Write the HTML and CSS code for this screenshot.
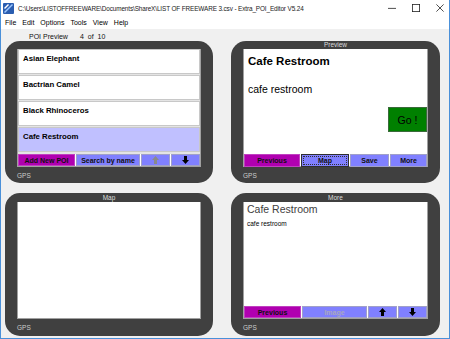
FILE: index.html
```html
<!DOCTYPE html>
<html lang="en">

<head>
    <meta charset="UTF-8">
    <title>Extra_POI_Editor V5.24</title>
    <link rel="stylesheet" href="styles.css">
</head>

<body>
    <div class="window">
        <div class="titlebar">
            <svg class="app-icon" width="11" height="11" viewBox="0 0 11 11">
                <rect x="0" y="0" width="11" height="11" rx="1" fill="#2a5db0"/>
                <path d="M1 9 L9 1 L10 2 L2 10 Z" fill="#9cc8ff"/>
                <path d="M1 5 L5 1 L6 2 L2 6 Z" fill="#ffffff"/>
            </svg>
            <span class="title">C:\Users\LISTOFFREEWARE\Documents\ShareX\LIST OF FREEWARE 3.csv - Extra_POI_Editor V5.24</span>
            <div class="controls">
                <svg width="10" height="10" viewBox="0 0 10 10"><path d="M0 5.5 H10" stroke="#222" stroke-width="1"/></svg>
                <svg width="10" height="10" viewBox="0 0 10 10"><rect x="0.5" y="0.5" width="9" height="9" fill="none" stroke="#222" stroke-width="1"/></svg>
                <svg width="10" height="10" viewBox="0 0 10 10"><path d="M0.5 0.5 L9.5 9.5 M9.5 0.5 L0.5 9.5" stroke="#222" stroke-width="1"/></svg>
            </div>
        </div>

        <div class="menubar">
            <span>File</span>
            <span>Edit</span>
            <span>Options</span>
            <span>Tools</span>
            <span>View</span>
            <span>Help</span>
        </div>

        <div class="client">
            <div class="status">
                <span class="status-name">POI Preview</span>
                <span class="status-count">4 &nbsp;of &nbsp;10</span>
            </div>

            <div class="panels">
                <!-- list of POIs -->
                <div class="device">
                    <div class="cap"></div>
                    <div class="screen">
                        <div class="poi-list">
                            <div class="poi">Asian Elephant</div>
                            <div class="poi">Bactrian Camel</div>
                            <div class="poi">Black Rhinoceros</div>
                            <div class="poi selected">Cafe Restroom</div>
                        </div>
                        <div class="btn-row list-btns">
                            <div class="btn magenta">Add New POI</div>
                            <div class="btn">Search by name</div>
                            <div class="btn"><svg width="7" height="8" viewBox="0 0 7 8"><path d="M3.5 0 L7 4 H5 V8 H2 V4 H0 Z" fill="#8a8a8a"/></svg></div>
                            <div class="btn"><svg width="7" height="8" viewBox="0 0 7 8"><path d="M3.5 8 L7 4 H5 V0 H2 V4 H0 Z" fill="#000"/></svg></div>
                        </div>
                    </div>
                    <div class="gps">GPS</div>
                </div>

                <!-- preview -->
                <div class="device">
                    <div class="cap">Preview</div>
                    <div class="screen">
                        <div class="preview-body">
                            <div class="preview-name">Cafe Restroom</div>
                            <div class="preview-desc">cafe restroom</div>
                            <div class="go">Go !</div>
                        </div>
                        <div class="btn-row preview-btns">
                            <div class="btn magenta">Previous</div>
                            <div class="btn pressed"><span>Map</span></div>
                            <div class="btn">Save</div>
                            <div class="btn">More</div>
                        </div>
                    </div>
                    <div class="gps">GPS</div>
                </div>

                <!-- map -->
                <div class="device low">
                    <div class="cap">Map</div>
                    <div class="screen"></div>
                    <div class="gps">GPS</div>
                </div>

                <!-- more -->
                <div class="device low">
                    <div class="cap">More</div>
                    <div class="screen">
                        <div class="more-body">
                            <div class="more-name">Cafe Restroom</div>
                            <div class="more-desc">cafe restroom</div>
                        </div>
                        <div class="btn-row more-btns">
                            <div class="btn magenta">Previous</div>
                            <div class="btn disabled">Image</div>
                            <div class="btn"><svg width="7" height="8" viewBox="0 0 7 8"><path d="M3.5 0 L7 4 H5 V8 H2 V4 H0 Z" fill="#000"/></svg></div>
                            <div class="btn"><svg width="7" height="8" viewBox="0 0 7 8"><path d="M3.5 8 L7 4 H5 V0 H2 V4 H0 Z" fill="#000"/></svg></div>
                        </div>
                    </div>
                    <div class="gps">GPS</div>
                </div>
            </div>
        </div>
    </div>
</body>

</html>
```

FILE: styles.css
```css
* {
    margin: 0;
    padding: 0;
    box-sizing: border-box;
}

body {
    width: 450px;
    height: 339px;
    overflow: hidden;
    font-family: 'Liberation Sans', Arial, sans-serif;
    color: #000;
    background-color: #f0f0f0;
}

.window {
    width: 450px;
    height: 339px;
    display: flex;
    flex-direction: column;
    border: 1px solid #4a90d9;
    border-top: none;
    background-color: #f0f0f0;
}

.titlebar {
    height: 16px;
    display: flex;
    align-items: center;
    background-color: #fff;
    padding-left: 2px;
}

.app-icon {
    flex: none;
    margin-right: 4px;
}

.title {
    font-size: 6.4px;
    letter-spacing: -0.12px;
    color: #222;
    white-space: nowrap;
    flex: 1;
}

.controls {
    display: flex;
    gap: 16px;
    padding-right: 5px;
}

.controls svg {
    width: 8px;
    height: 8px;
}

.menubar {
    height: 13px;
    display: flex;
    align-items: center;
    gap: 6px;
    padding-left: 4px;
    background-color: #fff;
    font-size: 7px;
}

.client {
    flex: 1;
    padding: 0 0 0 4px;
}

.status {
    height: 12px;
    display: flex;
    align-items: center;
    font-size: 7px;
    color: #111;
    padding-left: 24px;
    padding-top: 3px;
}

.status-name {
    width: 51px;
}

.panels {
    display: grid;
    grid-template-columns: 208px 209px;
    grid-template-rows: 142px 143px;
    column-gap: 18px;
    row-gap: 10px;
}

.device {
    background-color: #404040;
    border-radius: 15px;
    display: flex;
    flex-direction: column;
    padding: 0 12px 0 12px;
}

.cap {
    height: 8px;
    font-size: 6.5px;
    line-height: 7px;
    color: #ddd;
    text-align: center;
}

.device.low .cap {
    height: 9px;
    line-height: 9px;
}

.screen {
    flex: 1;
    background-color: #fff;
    border: 1px solid #a0a0a0;
    border-top: none;
    display: flex;
    flex-direction: column;
}

.gps {
    height: 16px;
    font-size: 6.5px;
    color: #ccc;
    padding-top: 5px;
}

.device.low .gps {
    height: 17px;
    padding-top: 5px;
}

.poi-list {
    flex: 1;
    display: flex;
    flex-direction: column;
    gap: 1px;
    background-color: #e4e4e4;
    padding-bottom: 2px;
}

.poi {
    flex: 1;
    background-color: #fff;
    border: 1px solid #c8c8c8;
    font-size: 7.8px;
    font-weight: bold;
    padding: 4px 4px;
}

.poi.selected {
    background-color: #c0c0ff;
}

.btn-row {
    height: 12px;
    display: grid;
    gap: 1px;
    background-color: #fff;
}

.list-btns {
    grid-template-columns: 57px 64px 29px 1fr;
}

.preview-btns {
    grid-template-columns: 56px 48px 39px 1fr;
}

.more-btns {
    grid-template-columns: 57px 65px 29px 1fr;
}

.btn {
    background-color: #8080ff;
    border: 1px solid #a0a0c8;
    font-size: 7px;
    font-weight: bold;
    color: #101010;
    display: flex;
    align-items: center;
    justify-content: center;
}

.btn.magenta {
    background-color: #b000b0;
    border-color: #c040c0;
}

.btn.pressed {
    border: 1px solid #303030;
    padding: 1px;
}

.btn.pressed span {
    display: flex;
    align-items: center;
    justify-content: center;
    width: 100%;
    height: 100%;
    border: 1px dotted #303030;
}

.btn.disabled {
    color: #a8a8c0;
}

.preview-body {
    flex: 1;
    position: relative;
    padding: 6px 4px;
}

.preview-name {
    font-size: 11.5px;
    font-weight: bold;
}

.preview-desc {
    font-size: 10.5px;
    margin-top: 16px;
}

.go {
    position: absolute;
    right: 0;
    top: 58px;
    width: 39px;
    height: 25px;
    background-color: #008000;
    border: 1px solid #3a6a3a;
    font-size: 10.5px;
    display: flex;
    align-items: center;
    justify-content: center;
}

.more-body {
    flex: 1;
    padding: 1px 3px;
}

.more-name {
    font-size: 10.5px;
    color: #404040;
}

.more-desc {
    font-size: 6.5px;
    margin-top: 5px;
}
```
